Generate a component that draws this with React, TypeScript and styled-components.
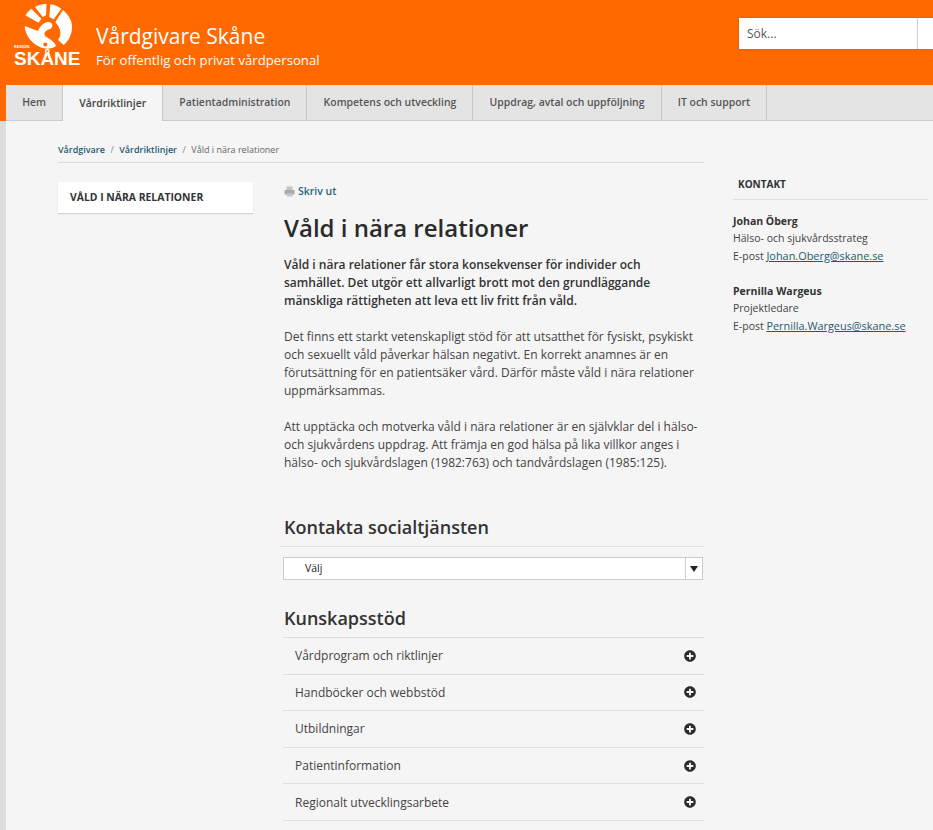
import React from 'react';
import styled, { createGlobalStyle } from 'styled-components';
import { FaPlusCircle } from 'react-icons/fa';

const GlobalStyle = createGlobalStyle`
    html, body {
        margin: 0;
        height: 100%;
        overflow: hidden;
    }

    body {
        background-color: #f5f5f5;
        font-family: 'Open Sans', sans-serif;
        color: #333;
    }

    * {
        box-sizing: border-box;
    }
`;

const Logo = () => (
    <LogoBox>
        <svg width="52" height="48" viewBox="0 0 52 48">
            <g fill="#fff">
                <path d="M3.500 13.500 C5 11 7 8.500 9.300 6.800 L19.300 16.700 L16.700 20.700 Z" />
                <path d="M13 5 C16 3.300 20 2 24.500 1.700 L24 13.300 L20.700 15 Z" />
                <path d="M28.300 2.300 C32 2.800 36 4.200 39.300 6.700 L31.700 17.300 L27.300 15 Z" />
                <path d="M41 8 C47 13 50 19 50 25 C50 32 47 38.500 41.700 43 L36 38 C38.500 35 39 31 38 28 C37 25 35.500 22.500 33.300 20 Z" />
                <path d="M2.700 24 L16 29 C18 25 20 21 26 20 C31 20 32 25 28 27 C22 29 20 33 26 36 C30 38 33 41 34 44 C29 47.500 22 47.500 16 44 C8 40 3 32 2.700 24 Z" />
            </g>
            <circle cx="23.300" cy="42.500" r="2" fill="#ff6900" />
        </svg>
        <LogoRegion>REGION</LogoRegion>
        <LogoName>SKÅNE</LogoName>
    </LogoBox>
);

const PrintIcon = () => (
    <svg width="11" height="11" viewBox="0 0 11 11">
        <rect x="2.500" y="0.500" width="6" height="4" fill="#c4c4c4" />
        <rect x="0.500" y="4" width="10" height="4.500" rx="0.500" fill="#aaa" />
        <rect x="2.500" y="7.500" width="6" height="3" fill="#c8c8c8" />
    </svg>
);

const navItems = [
    { label: 'Hem' },
    { label: 'Vårdriktlinjer', active: true },
    { label: 'Patientadministration' },
    { label: 'Kompetens och utveckling' },
    { label: 'Uppdrag, avtal och uppföljning' },
    { label: 'IT och support' },
];

const accordionItems = [
    'Vårdprogram och riktlinjer',
    'Handböcker och webbstöd',
    'Utbildningar',
    'Patientinformation',
    'Regionalt utvecklingsarbete',
];

const App = () => {
    return (
        <>
            <GlobalStyle />
            <Header>
                <Logo />
                <SiteTitle>
                    <SiteName>Vårdgivare Skåne</SiteName>
                    <SiteTagline>För offentlig och privat vårdpersonal</SiteTagline>
                </SiteTitle>
                <Search>
                    <SearchInput>Sök...</SearchInput>
                    <SearchButton />
                </Search>
            </Header>
            <NavBar>
                <NavList>
                    {navItems.map((item) => (
                        <NavItem key={item.label} $active={item.active}>
                            {item.label}
                        </NavItem>
                    ))}
                </NavList>
            </NavBar>
            <Page>
                <MainColumn>
                    <Breadcrumbs>
                        <Crumb>Vårdgivare</Crumb>
                        <Separator>/</Separator>
                        <Crumb>Vårdriktlinjer</Crumb>
                        <Separator>/</Separator>
                        <CurrentCrumb>Våld i nära relationer</CurrentCrumb>
                    </Breadcrumbs>
                    <Columns>
                        <SideMenu>
                            <SideMenuItem>Våld i nära relationer</SideMenuItem>
                        </SideMenu>
                        <Content>
                            <PrintLink>
                                <PrintIcon />
                                <span>Skriv ut</span>
                            </PrintLink>
                            <Title>Våld i nära relationer</Title>
                            <Lead>
                                Våld i nära relationer får stora konsekvenser för individer och samhället. Det
                                utgör ett allvarligt brott mot den grundläggande mänskliga rättigheten att leva
                                ett liv fritt från våld.
                            </Lead>
                            <Paragraph>
                                Det finns ett starkt vetenskapligt stöd för att utsatthet för fysiskt, psykiskt
                                och sexuellt våld påverkar hälsan negativt. En korrekt anamnes är en
                                förutsättning för en patientsäker vård. Därför måste våld i nära relationer
                                uppmärksammas.
                            </Paragraph>
                            <Paragraph>
                                Att upptäcka och motverka våld i nära relationer är en självklar del i hälso-
                                och sjukvårdens uppdrag. Att främja en god hälsa på lika villkor anges i
                                hälso- och sjukvårdslagen (1982:763) och tandvårdslagen (1985:125).
                            </Paragraph>
                            <ContactHeading>Kontakta socialtjänsten</ContactHeading>
                            <Select>
                                <SelectValue>Välj</SelectValue>
                                <SelectArrow>
                                    <ArrowGlyph />
                                </SelectArrow>
                            </Select>
                            <SupportHeading>Kunskapsstöd</SupportHeading>
                            <Accordion>
                                {accordionItems.map((item) => (
                                    <AccordionRow key={item}>
                                        {item}
                                        <FaPlusCircle size={12} color="#2b2b2b" />
                                    </AccordionRow>
                                ))}
                            </Accordion>
                        </Content>
                    </Columns>
                </MainColumn>
                <Aside>
                    <AsideTitle>Kontakt</AsideTitle>
                    <ContactCard>
                        <ContactName>Johan Öberg</ContactName>
                        <ContactLine>Hälso- och sjukvårdsstrateg</ContactLine>
                        <ContactLine>
                            E-post <ContactMail>Johan.Oberg@skane.se</ContactMail>
                        </ContactLine>
                    </ContactCard>
                    <ContactCard>
                        <ContactName>Pernilla Wargeus</ContactName>
                        <ContactLine>Projektledare</ContactLine>
                        <ContactLine>
                            E-post <ContactMail>Pernilla.Wargeus@skane.se</ContactMail>
                        </ContactLine>
                    </ContactCard>
                </Aside>
            </Page>
        </>
    );
};

export default App;

const Header = styled.header`
    display: flex;
    height: 85px;
    background-color: #ff6900;
    padding-left: 12px;
    width: 933px;
    overflow: hidden;
`;

const LogoBox = styled.div`
    position: relative;
    width: 72px;
    height: 70px;
    padding-left: 10px;
    color: #fff;
    margin-top: 2px;
`;

const LogoRegion = styled.div`
    position: absolute;
    left: 2px;
    top: 43px;
    font-size: 4px;
    font-weight: 700;
    line-height: 4px;
`;

const LogoName = styled.div`
    position: absolute;
    left: 2px;
    top: 50px;
    font-family: 'Liberation Sans', sans-serif;
    font-size: 19px;
    line-height: 13px;
    font-weight: 700;
`;

const SiteTitle = styled.div`
    margin-left: 12px;
    padding-top: 22px;
    color: #fff;
`;

const SiteName = styled.div`
    font-size: 21px;
    line-height: 28px;
`;

const SiteTagline = styled.div`
    font-size: 13.200px;
    line-height: 20px;
`;

const Search = styled.div`
    display: flex;
    flex-shrink: 0;
    height: 31px;
    margin: 18px 0 0 auto;
    background-color: #fff;
    width: 194px;
    box-shadow: 0 0 2px rgba(0, 0, 0, 0.2);
`;

const SearchInput = styled.div`
    width: 179px;
    padding: 0 8px;
    font-size: 12px;
    line-height: 31px;
    color: #555;
    border-right: 1px solid #ccc;
`;

const SearchButton = styled.div`
    flex: 1;
`;

const NavBar = styled.nav`
    background-color: #ff6900;
    padding-left: 6px;
`;

const NavList = styled.div`
    display: flex;
    height: 36px;
    background-color: #e4e4e4;
    border-bottom: 1px solid #ccc;
`;

const NavItem = styled.div<{ $active?: boolean }>`
    display: flex;
    align-items: center;
    padding: 0 16px 1px 16.200px;
    height: ${(props) => (props.$active ? '36px' : '35px')};
    font-size: 10.450px;
    font-weight: 600;
    color: ${(props) => (props.$active ? '#444' : '#555')};
    background-color: ${(props) => (props.$active ? '#f5f5f5' : 'transparent')};
    border-right: 1px solid #c8c8c8;
`;

const Page = styled.div`
    display: flex;
    border-left: 6px solid #dddddd;
    min-height: 709px;
    padding-left: 52px;
`;

const MainColumn = styled.div`
    width: 646px;
    flex-shrink: 0;
`;

const Breadcrumbs = styled.div`
    display: flex;
    align-items: center;
    height: 42px;
    padding-top: 15px;
    font-size: 9px;
    border-bottom: 1px solid #ddd;
`;

const Crumb = styled.span`
    color: #1d5a73;
    font-weight: 600;
`;

const Separator = styled.span`
    color: #888;
    margin: 0 5.500px;
`;

const CurrentCrumb = styled.span`
    color: #666;
`;

const Columns = styled.div`
    display: flex;
    padding-top: 19px;
`;

const SideMenu = styled.div`
    width: 195px;
    flex-shrink: 0;
    align-self: flex-start;
    background-color: #fff;
    box-shadow: 0 1px 1px rgba(0, 0, 0, 0.15);
`;

const SideMenuItem = styled.div`
    padding: 0 12px;
    height: 31px;
    line-height: 31px;
    font-size: 10.400px;
    font-weight: 700;
    text-transform: uppercase;
    color: #333;
`;

const Content = styled.main`
    width: 421px;
    margin-left: 30px;
    flex-shrink: 0;
`;

const PrintLink = styled.div`
    display: flex;
    align-items: center;
    gap: 3px;
    height: 18px;
    padding-left: 1px;
    font-size: 10.500px;
    font-weight: 600;
    color: #2a6478;
`;

const Title = styled.h1`
    margin: 12px 0 0;
    padding-left: 1px;
    font-size: 24px;
    line-height: 32px;
    font-weight: 600;
    color: #2b2b2b;
`;

const Lead = styled.p`
    margin: 12px 0 0;
    padding-left: 1px;
    font-size: 12px;
    line-height: 18px;
    font-weight: 600;
    color: #333;
`;

const Paragraph = styled.p`
    margin: 18px 0 0;
    padding-left: 1px;
    font-size: 12px;
    line-height: 18px;
    color: #444;
`;

const ContactHeading = styled.h2`
    margin: 42px 0 0 -3px;
    padding: 0 0 5px 4px;
    font-size: 18px;
    line-height: 27px;
    font-weight: 600;
    color: #333;
    border-bottom: 1px solid #e0e0e0;
`;

const Select = styled.div`
    display: flex;
    height: 23px;
    margin: 10px 1px 0 0;
    background-color: #fff;
    border: 1px solid #ccc;
`;

const SelectValue = styled.div`
    flex: 1;
    padding-left: 21px;
    font-size: 10.500px;
    line-height: 21px;
    color: #222;
`;

const SelectArrow = styled.div`
    display: flex;
    align-items: center;
    justify-content: center;
    width: 17px;
    border-left: 1px solid #ccc;
`;

const ArrowGlyph = styled.span`
    width: 0;
    height: 0;
    border-left: 4px solid transparent;
    border-right: 4px solid transparent;
    border-top: 6px solid #222;
`;

const SupportHeading = styled.h2`
    margin: 25px 0 0;
    padding: 0 0 5px 1px;
    font-size: 18px;
    line-height: 27px;
    font-weight: 600;
    color: #333;
`;

const Accordion = styled.div`
    border-top: 1px solid #ddd;
`;

const AccordionRow = styled.div`
    display: flex;
    align-items: center;
    justify-content: space-between;
    height: 36.600px;
    padding: 0 8px 0 12px;
    font-size: 12px;
    color: #444;
    border-bottom: 1px solid #ddd;
`;

const Aside = styled.aside`
    width: 195px;
    margin-left: 29px;
    flex-shrink: 0;
    padding-top: 55px;
`;

const AsideTitle = styled.div`
    padding: 0 5px 7px;
    font-size: 10px;
    line-height: 16px;
    font-weight: 700;
    text-transform: uppercase;
    color: #333;
    border-bottom: 1px solid #ddd;
`;

const ContactCard = styled.div`
    margin-top: 13px;

    & + & {
        margin-top: 18px;
    }
`;

const ContactName = styled.div`
    font-size: 10.500px;
    line-height: 16px;
    font-weight: 700;
    color: #333;
`;

const ContactLine = styled.div`
    font-size: 10.500px;
    line-height: 18px;
    color: #444;
`;

const ContactMail = styled.span`
    font-size: 10.900px;
    color: #1d5a73;
    text-decoration: underline;
`;
